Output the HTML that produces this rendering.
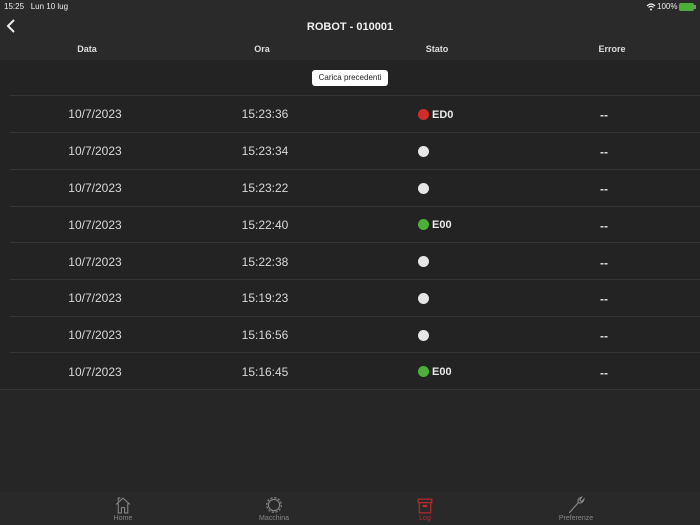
<!DOCTYPE html>
<html><head><meta charset="utf-8"><style>
*{margin:0;padding:0;box-sizing:border-box}
body{width:700px;height:525px;background:#262626;font-family:"Liberation Sans",sans-serif;color:#ddd;position:relative;overflow:hidden}
.top{position:absolute;left:0;top:0;width:700px;height:60px;background:#2a2a2a}
.abs{position:absolute}
.body{position:absolute;left:0;top:60px;width:700px;height:329px;background:#232323}
.line{position:absolute;left:10px;right:0;height:1px;background:#353535}
.cell{position:absolute;font-size:12px;color:#d8d8d8;transform:translateX(-50%)}
.dash{position:absolute;font-size:12px;font-weight:bold;color:#e0e0e0;transform:translateX(-50%)}
.dot{position:absolute;width:11px;height:11px;border-radius:50%}
.code{position:absolute;font-size:11px;font-weight:bold;color:#e8e8e8}
.tab{position:absolute;top:492px;left:0;width:700px;height:33px;background:#292929}
.tl{position:absolute;top:515px;font-size:7px;color:#888;transform:translateX(-50%)}
</style></head><body>
<div class="top"></div>
<div class="abs" style="left:4px;top:2px;font-size:8px;color:#eee">15:25&nbsp;&nbsp; Lun 10 lug</div>
<div class="abs" style="left:657px;top:2px;font-size:8px;color:#eee">100%</div>
<svg class="abs" style="left:646px;top:3px" width="10" height="8" viewBox="0 0 10 8"><path d="M1 3Q5 -1 9 3M2.5 4.5Q5 2 7.5 4.5" stroke="#eee" fill="none" stroke-width="1.2"/><circle cx="5" cy="6.5" r="1" fill="#eee"/></svg>
<div class="abs" style="left:679px;top:3px;width:15px;height:8px;background:#4caf3a;border-radius:2px"></div>
<div class="abs" style="left:694px;top:5px;width:1.5px;height:4px;background:#888"></div>
<svg class="abs" style="left:6px;top:18px" width="10" height="16" viewBox="0 0 10 16"><path d="M8 2L2 8L8 14" stroke="#eee" stroke-width="2" fill="none"/></svg>
<div class="abs" style="left:0;width:700px;top:21px;text-align:center;font-size:11px;font-weight:bold;color:#f0f0f0">ROBOT - 010001</div>
<div class="cell" style="left:87px;top:44px;font-size:9px;font-weight:bold;color:#ddd">Data</div>
<div class="cell" style="left:262px;top:44px;font-size:9px;font-weight:bold;color:#ddd">Ora</div>
<div class="cell" style="left:437px;top:44px;font-size:9px;font-weight:bold;color:#ddd">Stato</div>
<div class="cell" style="left:612px;top:44px;font-size:9px;font-weight:bold;color:#ddd">Errore</div>
<div class="body"></div>
<div class="abs" style="left:312px;top:70px;width:76px;height:16px;background:#fff;border-radius:3px;color:#222;font-size:8px;text-align:center;line-height:16px">Carica precedenti</div>
<div class="line" style="top:95px"></div>
<div class="line" style="top:132px"></div>
<div class="line" style="top:169px"></div>
<div class="line" style="top:206px"></div>
<div class="line" style="top:242px"></div>
<div class="line" style="top:279px"></div>
<div class="line" style="top:316px"></div>
<div class="line" style="top:352px"></div>
<div class="line" style="top:389px;left:0"></div>

<div class="cell" style="left:95px;top:107px">10/7/2023</div><div class="cell" style="left:265px;top:107px">15:23:36</div><div class="dot" style="left:418px;top:109px;background:#d32a2a"></div><div class="code" style="left:432px;top:109px">ED0</div><div class="dash" style="left:604px;top:108px">--</div>
<div class="cell" style="left:95px;top:144px">10/7/2023</div><div class="cell" style="left:265px;top:144px">15:23:34</div><div class="dot" style="left:418px;top:146px;background:#e6e6e6"></div><div class="dash" style="left:604px;top:145px">--</div>
<div class="cell" style="left:95px;top:181px">10/7/2023</div><div class="cell" style="left:265px;top:181px">15:23:22</div><div class="dot" style="left:418px;top:183px;background:#e6e6e6"></div><div class="dash" style="left:604px;top:182px">--</div>
<div class="cell" style="left:95px;top:218px">10/7/2023</div><div class="cell" style="left:265px;top:218px">15:22:40</div><div class="dot" style="left:418px;top:219px;background:#4caf3a"></div><div class="code" style="left:432px;top:219px">E00</div><div class="dash" style="left:604px;top:219px">--</div>
<div class="cell" style="left:95px;top:255px">10/7/2023</div><div class="cell" style="left:265px;top:255px">15:22:38</div><div class="dot" style="left:418px;top:256px;background:#e6e6e6"></div><div class="dash" style="left:604px;top:256px">--</div>
<div class="cell" style="left:95px;top:291px">10/7/2023</div><div class="cell" style="left:265px;top:291px">15:19:23</div><div class="dot" style="left:418px;top:293px;background:#e6e6e6"></div><div class="dash" style="left:604px;top:292px">--</div>
<div class="cell" style="left:95px;top:328px">10/7/2023</div><div class="cell" style="left:265px;top:328px">15:16:56</div><div class="dot" style="left:418px;top:330px;background:#e6e6e6"></div><div class="dash" style="left:604px;top:329px">--</div>
<div class="cell" style="left:95px;top:365px">10/7/2023</div><div class="cell" style="left:265px;top:365px">15:16:45</div><div class="dot" style="left:418px;top:366px;background:#4caf3a"></div><div class="code" style="left:432px;top:366px">E00</div><div class="dash" style="left:604px;top:366px">--</div>

<div class="tab"></div>
<svg class="abs" style="left:115px;top:497px" width="16" height="17" viewBox="0 0 15 16"><path d="M1 7L7.5 1L14 7M3 6V15H6V10H9V15H12V6M3 4V1H5" stroke="#888" fill="none" stroke-width="1"/></svg>
<div class="tl" style="left:123px">Home</div>
<svg class="abs" style="left:265px;top:496px" width="18" height="18" viewBox="0 0 16 16"><circle cx="8" cy="8" r="5" stroke="#888" fill="none"/><circle cx="8" cy="8" r="6.5" stroke="#888" fill="none" stroke-dasharray="2 1.4"/></svg>
<div class="tl" style="left:274px">Macchina</div>
<svg class="abs" style="left:417px;top:498px" width="16" height="16" viewBox="0 0 14 14"><rect x="1" y="1" width="12" height="3" stroke="#c0282a" fill="none"/><rect x="2" y="4" width="10" height="9" stroke="#c0282a" fill="none"/><rect x="5" y="6" width="4" height="2" fill="#c0282a"/></svg>
<div class="tl" style="left:425px;color:#c0282a">Log</div>
<svg class="abs" style="left:567px;top:496px" width="18" height="18" viewBox="0 0 16 16"><path d="M2 15L10 6M10 6Q9 2 13 1L11.5 3.5L13 5L15 3Q14 7 10 6" stroke="#888" fill="none"/></svg>
<div class="tl" style="left:576px">Preferenze</div>
</body></html>
